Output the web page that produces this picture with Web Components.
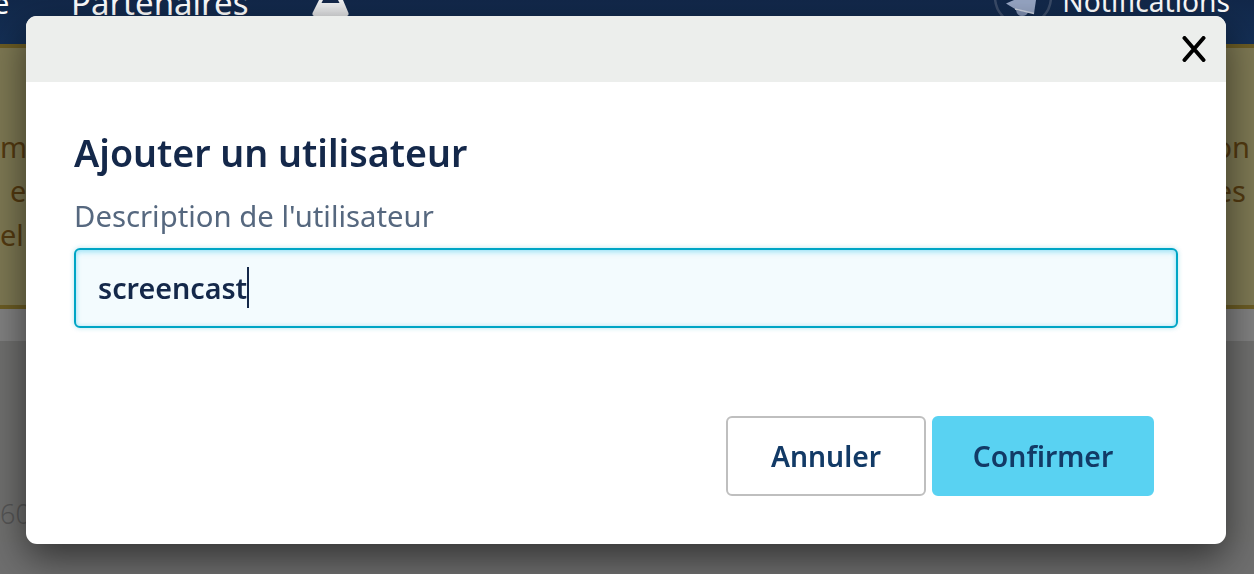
<!DOCTYPE html>
<html lang="fr">
<head>
<meta charset="utf-8">
<title>Ajouter un utilisateur</title>
<style>
  html, body { margin: 0; height: 100%; overflow: hidden; }
  body { font-family: "Noto Sans", "Open Sans", sans-serif; background: #6f6f6f; }
</style>
</head>
<body>
<template id="nav-bar-template">
  <style>
    :host {
      display: flex;
      align-items: flex-end;
      height: 44px;
      background: linear-gradient(#12284a, #142f55);
      color: #fff;
      overflow: hidden;
    }
    .item { flex: none; line-height: 32px; }
    .home { width: 71px; margin-left: -7px; margin-right: 7px; font-size: 29px; padding-bottom: 25px; }
    .partners { font-size: 33px; padding-bottom: 25px; }
    svg { display: block; flex: none; margin-bottom: 28px; }
    .flask { margin-left: 64px; }
    .spacer { flex: 1; }
    .bell { margin-right: 9px; }
    .notifications { font-size: 28.200px; padding-bottom: 27px; margin-right: 24px; }
  </style>
  <span class="item home">e</span>
  <span class="item partners">Partenaires</span>
  <svg class="flask" width="37" height="16" viewBox="0 0 37 16">
    <defs>
      <linearGradient id="flask-fill" x1="0" y1="0" x2="0" y2="1">
        <stop offset="0" stop-color="#f4f5f6"/>
        <stop offset="1" stop-color="#dcdddf"/>
      </linearGradient>
    </defs>
    <path d="M7 0h24l5.500 13q.5 3-2 3H2.500q-2.500 0-2-3z" fill="url(#flask-fill)"/>
    <path d="M11 0h15l1.500 3h-18z" fill="#14284a"/>
  </svg>
  <span class="spacer"></span>
  <svg class="bell" width="60" height="16" viewBox="0 0 60 16">
    <circle cx="30" cy="-3" r="28" fill="none" stroke="#3a4b68" stroke-width="2.500"/>
    <path d="M23 10q1 6 6 6t6-4z" fill="#7f8fb0"/>
    <path d="M13 3.500l8-3.500h22l-2 13.500-19-4.500z" fill="#97a6c4"/>
    <path d="M22 9l19 4.500" stroke="#ccd3e0" stroke-width="1.500" fill="none"/>
  </svg>
  <span class="item notifications">Notifications</span>
</template>

<template id="alert-banner-template">
  <style>
    :host {
      display: flex;
      flex-direction: column;
      box-sizing: border-box;
      height: 265px;
      padding-top: 77px;
      background: #7d7853;
      border-top: 4px solid #6b5c24;
      border-bottom: 4px solid #6b5c24;
      color: #533a10;
      font-size: 29px;
      line-height: 44px;
      overflow: hidden;
    }
  </style>
  <slot></slot>
</template>

<template id="banner-line-template">
  <style>
    :host { display: flex; justify-content: space-between; height: 44px; white-space: nowrap; }
  </style>
  <slot></slot>
</template>

<template id="page-body-template">
  <style>
    :host { display: block; height: 233px; color: #555; }
    .band { height: 32px; background: #808080; }
    .rest {
      height: 201px;
      box-sizing: border-box;
      padding-top: 153px;
      background: #6f6f6e;
      font-size: 27px;
      font-weight: 300;
      line-height: 40px;
    }
  </style>
  <div class="band"></div>
  <div class="rest"><slot></slot></div>
</template>

<template id="modal-dialog-template">
  <style>
    :host {
      position: fixed;
      left: 26px;
      top: 16px;
      width: 1200px;
      height: 528px;
      display: flex;
      flex-direction: column;
      background: #fff;
      border-radius: 11px;
      box-shadow: 0 14px 38px rgba(0, 0, 0, .55);
      overflow: hidden;
      color: #14284a;
    }
    header {
      flex: none;
      height: 66px;
      display: flex;
      align-items: center;
      justify-content: flex-end;
      padding-right: 19px;
      background: #eceeec;
    }
    svg { display: block; }
    .content { flex: 1; display: flex; flex-direction: column; padding: 47px 48px 48px; }
    h2 { margin: 0; font-size: 37.600px; line-height: 48px; font-weight: 600; }
    .footer { margin-top: auto; display: flex; justify-content: flex-end; gap: 6px; padding-right: 24px; }
  </style>
  <header>
    <svg width="26" height="26" viewBox="0 0 26 26">
      <path d="M3.500 2l19 22M22.500 2l-19 22" stroke="#000" stroke-width="4" stroke-linecap="round" fill="none"/>
    </svg>
  </header>
  <div class="content">
    <h2><slot name="title"></slot></h2>
    <slot></slot>
    <div class="footer"><slot name="actions"></slot></div>
  </div>
</template>

<template id="text-field-template">
  <style>
    :host { display: block; }
    label { display: block; margin-top: 21px; font-size: 29.300px; line-height: 36px; color: #56687f; }
    .box {
      box-sizing: border-box;
      height: 80px;
      margin-top: 14px;
      display: flex;
      align-items: center;
      padding: 0 0 2px 22px;
      background: #f3fbfe;
      border: 2px solid #00a5c5;
      border-radius: 6px;
      box-shadow: inset 0 3px 5px rgba(89, 210, 242, .35), inset 0 0 4px rgba(89, 210, 242, .4), 0 0 5px rgba(0, 167, 199, .3);
      font-size: 28.700px;
      font-weight: 600;
      color: #14284a;
    }
    .caret { width: 2px; height: 41px; background: #14284a; }
  </style>
  <label><slot name="label"></slot></label>
  <div class="box"><slot></slot><span class="caret"></span></div>
</template>

<template id="action-button-template">
  <style>
    :host {
      box-sizing: border-box;
      display: flex;
      align-items: center;
      justify-content: center;
      height: 80px;
      width: var(--width, 200px);
      border: 2px solid #bfbfbf;
      border-radius: 6px;
      background: #fff;
      color: #123a66;
      font-size: 28.300px;
      font-weight: 600;
    }
    :host([primary]) { background: #59d2f2; border-color: #59d2f2; }
  </style>
  <slot></slot>
</template>

<nav-bar></nav-bar>
<alert-banner>
  <banner-line><span>m</span><span style="margin-right:4px">on</span></banner-line>
  <banner-line><span style="margin-left:10px">e</span><span style="margin-right:8px">es</span></banner-line>
  <banner-line><span>el</span></banner-line>
</alert-banner>
<page-body>60</page-body>

<modal-dialog>
  <span slot="title">Ajouter un utilisateur</span>
  <text-field><span slot="label">Description de l'utilisateur</span>screencast</text-field>
  <action-button slot="actions" style="--width:200px">Annuler</action-button>
  <action-button slot="actions" primary style="--width:222px">Confirmer</action-button>
</modal-dialog>

<script>
  function defineFromTemplate(tag, templateId) {
    customElements.define(tag, class extends HTMLElement {
      constructor() {
        super();
        const root = this.attachShadow({mode: 'open'});
        root.appendChild(document.getElementById(templateId).content.cloneNode(true));
      }
    });
  }
  defineFromTemplate('nav-bar', 'nav-bar-template');
  defineFromTemplate('alert-banner', 'alert-banner-template');
  defineFromTemplate('banner-line', 'banner-line-template');
  defineFromTemplate('page-body', 'page-body-template');
  defineFromTemplate('modal-dialog', 'modal-dialog-template');
  defineFromTemplate('text-field', 'text-field-template');
  defineFromTemplate('action-button', 'action-button-template');
</script>
</body>
</html>
